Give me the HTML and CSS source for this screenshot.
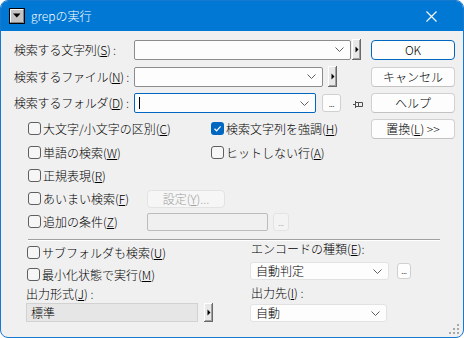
FILE: index.html
```html
<!DOCTYPE html>
<html lang="ja">
<head>
<meta charset="utf-8">
<title>grepの実行</title>
<link rel="stylesheet" href="styles.css">
</head>
<body>
<div class="window">
  <div class="titlebar">
    <span class="sysicon"><svg width="16" height="16" viewBox="0 0 16 16"><rect x="0.5" y="0.5" width="15" height="15" fill="#c4c4c4" stroke="#000"/><path d="M1.5 14V1.5H14" stroke="#fff" fill="none"/><path d="M14.5 1.5V14.5H1.5" stroke="#808080" fill="none"/><path d="M4 5.5h7.5L7.75 9.5z" fill="#000"/></svg></span>
    <span class="title">grepの実行</span>
    <span class="close"><svg width="11" height="11" viewBox="0 0 11 11"><path d="M0.5 0.5L10.5 10.5M10.5 0.5L0.5 10.5" stroke="#fff" stroke-width="1.1"/></svg></span>
  </div>
  <div class="content">
    <div class="top">
      <div class="row">
        <span class="flabel">検索する文字列(<u>S</u>) :</span>
        <div class="combo edit w1"><span class="chev"><svg width="9" height="5" viewBox="0 0 9 5"><path d="M0.5 0.5L4.5 4.5L8.5 0.5" stroke="#606060" fill="none"/></svg></span></div>
        <span class="spin g1"><svg width="9" height="21" viewBox="0 0 9 21"><path d="M3.5 7.5L6.5 10.5L3.5 13.5z" fill="#000"/></svg></span>
      </div>
      <button class="btn default">OK</button>

      <div class="row">
        <span class="flabel">検索するファイル(<u>N</u>) :</span>
        <div class="combo edit w2"><span class="chev"><svg width="9" height="5" viewBox="0 0 9 5"><path d="M0.5 0.5L4.5 4.5L8.5 0.5" stroke="#606060" fill="none"/></svg></span></div>
        <span class="spin g2"><svg width="9" height="21" viewBox="0 0 9 21"><path d="M3.5 7.5L6.5 10.5L3.5 13.5z" fill="#000"/></svg></span>
      </div>
      <button class="btn">キャンセル</button>

      <div class="row">
        <span class="flabel">検索するフォルダ(<u>D</u>) :</span>
        <div class="combo edit focus w3"><span class="caret"></span><span class="chev"><svg width="9" height="5" viewBox="0 0 9 5"><path d="M0.5 0.5L4.5 4.5L8.5 0.5" stroke="#606060" fill="none"/></svg></span></div>
        <button class="dots g3">...</button>
        <span class="pin"><svg width="10" height="9" viewBox="0 0 10 9"><path d="M0 4.5H3M2.5 1V8M3 2.5H9.5M3 6.5H9.5M5.5 2.5V6.5M9.5 2.5V6.5" stroke="#505050" fill="none"/></svg></span>
      </div>
      <button class="btn">ヘルプ</button>

      <div class="row cbrow">
        <label class="cb"><span class="box"></span>大文字/小文字の区別(<u>C</u>)</label>
        <label class="cb"><span class="box checked"><svg width="13" height="13" viewBox="0 0 13 13"><path d="M3.5 6.8L5.6 8.8L9.6 4.3" stroke="#fff" stroke-width="1.2" fill="none"/></svg></span>検索文字列を強調(<u>H</u>)</label>
      </div>
      <button class="btn">置換(<u>L</u>) &gt;&gt;</button>

      <div class="row cbrow">
        <label class="cb"><span class="box"></span>単語の検索(<u>W</u>)</label>
        <label class="cb"><span class="box"></span>ヒットしない行(<u>A</u>)</label>
      </div>

      <div class="row cbrow">
        <label class="cb"><span class="box"></span>正規表現(<u>R</u>)</label>
      </div>

      <div class="row cbrow narrow">
        <label class="cb"><span class="box"></span>あいまい検索(<u>F</u>)</label>
        <button class="btn disabled setting">設定(<u>Y</u>)...</button>
      </div>

      <div class="row cbrow narrow">
        <label class="cb"><span class="box"></span>追加の条件(<u>Z</u>)</label>
        <div class="inline">
          <div class="dinput"></div>
          <button class="dots disabled g4">...</button>
        </div>
      </div>
    </div>

    <div class="sep"></div>

    <div class="bottom">
      <div class="bleft">
        <div class="brow r1"><label class="cb"><span class="box"></span>サブフォルダも検索(<u>U</u>)</label></div>
        <div class="brow r2"><label class="cb"><span class="box"></span>最小化状態で実行(<u>M</u>)</label></div>
        <div class="brow r3">出力形式(<u>J</u>) :</div>
        <div class="brow r4">
          <div class="flat">標準</div>
          <span class="spin g5"><svg width="9" height="19" viewBox="0 0 9 19"><path d="M3.5 6.5L6.5 9.5L3.5 12.5z" fill="#000"/></svg></span>
        </div>
      </div>
      <div class="bright">
        <div class="rlabel l1">エンコードの種類(<u>E</u>):</div>
        <div class="rrow">
          <div class="combo list w5">自動判定<span class="chev"><svg width="9" height="5" viewBox="0 0 9 5"><path d="M0.5 0.5L4.5 4.5L8.5 0.5" stroke="#606060" fill="none"/></svg></span></div>
          <button class="dots g6">...</button>
        </div>
        <div class="rlabel l2">出力先(<u>I</u>) :</div>
        <div class="rrow r6">
          <div class="combo list w6">自動<span class="chev"><svg width="9" height="5" viewBox="0 0 9 5"><path d="M0.5 0.5L4.5 4.5L8.5 0.5" stroke="#606060" fill="none"/></svg></span></div>
        </div>
      </div>
    </div>
  </div>
  <span class="grip"><svg width="10" height="10" viewBox="0 0 10 10"><g fill="#a8a8a8"><rect x="8" y="0" width="2" height="2"/><rect x="4" y="4" width="2" height="2"/><rect x="8" y="4" width="2" height="2"/><rect x="0" y="8" width="2" height="2"/><rect x="4" y="8" width="2" height="2"/><rect x="8" y="8" width="2" height="2"/></g></svg></span>
</div>
</body>
</html>
```

FILE: styles.css
```css
* { box-sizing: border-box; }
html, body { margin: 0; padding: 0; background: #ffffff; }
body {
  font-family: "Noto Sans CJK JP", "Noto Sans", sans-serif;
  font-size: 12px;
  font-weight: 300;
  line-height: 16px;
  color: #000;
}
u { text-decoration: underline; text-underline-offset: 1px; text-decoration-thickness: 1px; }

.window {
  position: relative;
  width: 464px;
  height: 338px;
  border: 1px solid #1778d0;
  border-radius: 8px;
  background: #f0f0f0;
  overflow: hidden;
}

.titlebar {
  height: 30px;
  background: #0078d4;
  display: flex;
  align-items: center;
  padding-left: 8px;
  color: #fff;
}
.sysicon { display: block; width: 16px; height: 16px; }
.sysicon svg, .close svg, .spin svg, .pin svg, .grip svg, .chev svg, .box svg { display: block; }
.title { margin-left: 6px; font-size: 12px; }
.close { margin-left: auto; margin-right: 26px; width: 11px; height: 11px; }

.content { padding: 5px 8px 0 13px; }

.top {
  display: grid;
  grid-template-columns: 357px 84px;
  grid-template-rows: 27px 27px 26px 25px 23px 23px 23px 23px;
}
.row { grid-column: 1; display: flex; align-items: center; }
.flabel { flex: 0 0 120px; white-space: nowrap; letter-spacing: -0.2px; }

button { font: inherit; color: inherit; margin: 0; }

.btn {
  grid-column: 2;
  align-self: center;
  width: 84px;
  height: 20px;
  padding: 0;
  border: 1px solid #d0d0d0;
  border-bottom-color: #c2c2c2;
  border-radius: 4px;
  background: #fdfdfd;
  display: flex;
  align-items: center;
  justify-content: center;
  white-space: nowrap;
}
.btn.default { border-color: #0067c0; }
.btn.disabled { color: #a0a0a0; border-color: #e3e3e3; background: #f6f6f6; }
.btn.setting { width: 78px; height: 18px; }

.combo {
  position: relative;
  display: flex;
  align-items: center;
  height: 20px;
  background: #fdfdfd;
  border: 1px solid #8c8c8c;
  border-radius: 2px;
  flex: none;
}
.combo.focus { border-color: #0067c0; }
.combo.list { height: 18px; border-color: #e2e2e2; border-radius: 3px; padding-left: 5px; }
.chev { margin-left: auto; margin-right: 6px; }
.caret { display: block; width: 1px; height: 12px; background: #000; margin-left: 4px; }
.w1 { width: 217px; }
.w2 { width: 189px; }
.w3 { width: 182px; }
.w5 { width: 139px; }
.w6 { width: 137px; }

.spin {
  display: block;
  flex: none;
  width: 9px;
  height: 21px;
  background: #e8e8e8;
  box-shadow: inset -1px -1px #696969, inset 1px 1px #ffffff, inset -2px -2px #a0a0a0;
}
.g1 { margin-left: 1px; }
.g2 { margin-left: 5px; }
.g5 { margin-left: 6px; height: 19px; }

.dots {
  flex: none;
  padding: 0;
  background: #fdfdfd;
  border: 1px solid #d0d0d0;
  border-radius: 3px;
  font-size: 9px;
  line-height: 9px;
  display: flex;
  align-items: flex-end;
  justify-content: center;
  padding-bottom: 3px;
  letter-spacing: -0.5px;
}
.dots.disabled { color: #a0a0a0; border-color: #e3e3e3; background: #f3f3f3; }
.g3 { margin-left: 6px; width: 19px; height: 18px; }
.g4 { margin-left: 5px; width: 16px; height: 18px; }
.g6 { margin-left: 8px; width: 14px; height: 16px; }

.pin { display: block; margin-left: 12px; margin-top: 2px; }

.cbrow { display: grid; grid-template-columns: 183px auto; align-items: center; padding-left: 14px; }
.cbrow.narrow { grid-template-columns: 119px auto; }
.cb { display: flex; align-items: center; white-space: nowrap; }
.box {
  flex: none;
  width: 13px;
  height: 13px;
  margin-right: 2px;
  border: 1px solid #5f5f5f;
  border-radius: 3px;
  background: #f6f6f6;
}
.box.checked { background: #0067c0; border: none; }

.inline { display: flex; align-items: center; }
.dinput { width: 121px; height: 18px; border: 1px solid #bcbcbc; border-radius: 2px; background: #f0f0f0; }

.sep {
  margin: 6px 0 0 14px;
  width: 412px;
  height: 2px;
  border-top: 1px solid #a0a0a0;
  border-bottom: 1px solid #ffffff;
}

.bottom { display: flex; padding-left: 12px; }
.bleft { width: 224px; }
.bright { width: 200px; }
.brow { display: flex; align-items: center; white-space: nowrap; }
.brow .cb { margin-left: 1px; }
.r1 { height: 23px; }
.r2 { height: 21px; }
.r3 { height: 17px; }
.r4 { margin-top: 1px; height: 19px; }
.flat {
  width: 172px;
  height: 19px;
  background: #e6e6e6;
  border: 1px solid #d2d2d2;
  padding-left: 4px;
  display: flex;
  align-items: center;
}

.rlabel { height: 16px; padding-left: 1px; white-space: nowrap; }
.l2 { margin-top: 5px; }
.rrow { display: flex; align-items: center; margin-top: 5px; height: 18px; }
.r6 { margin-top: 3px; }

.grip { position: absolute; right: 4px; bottom: 3px; }
```
